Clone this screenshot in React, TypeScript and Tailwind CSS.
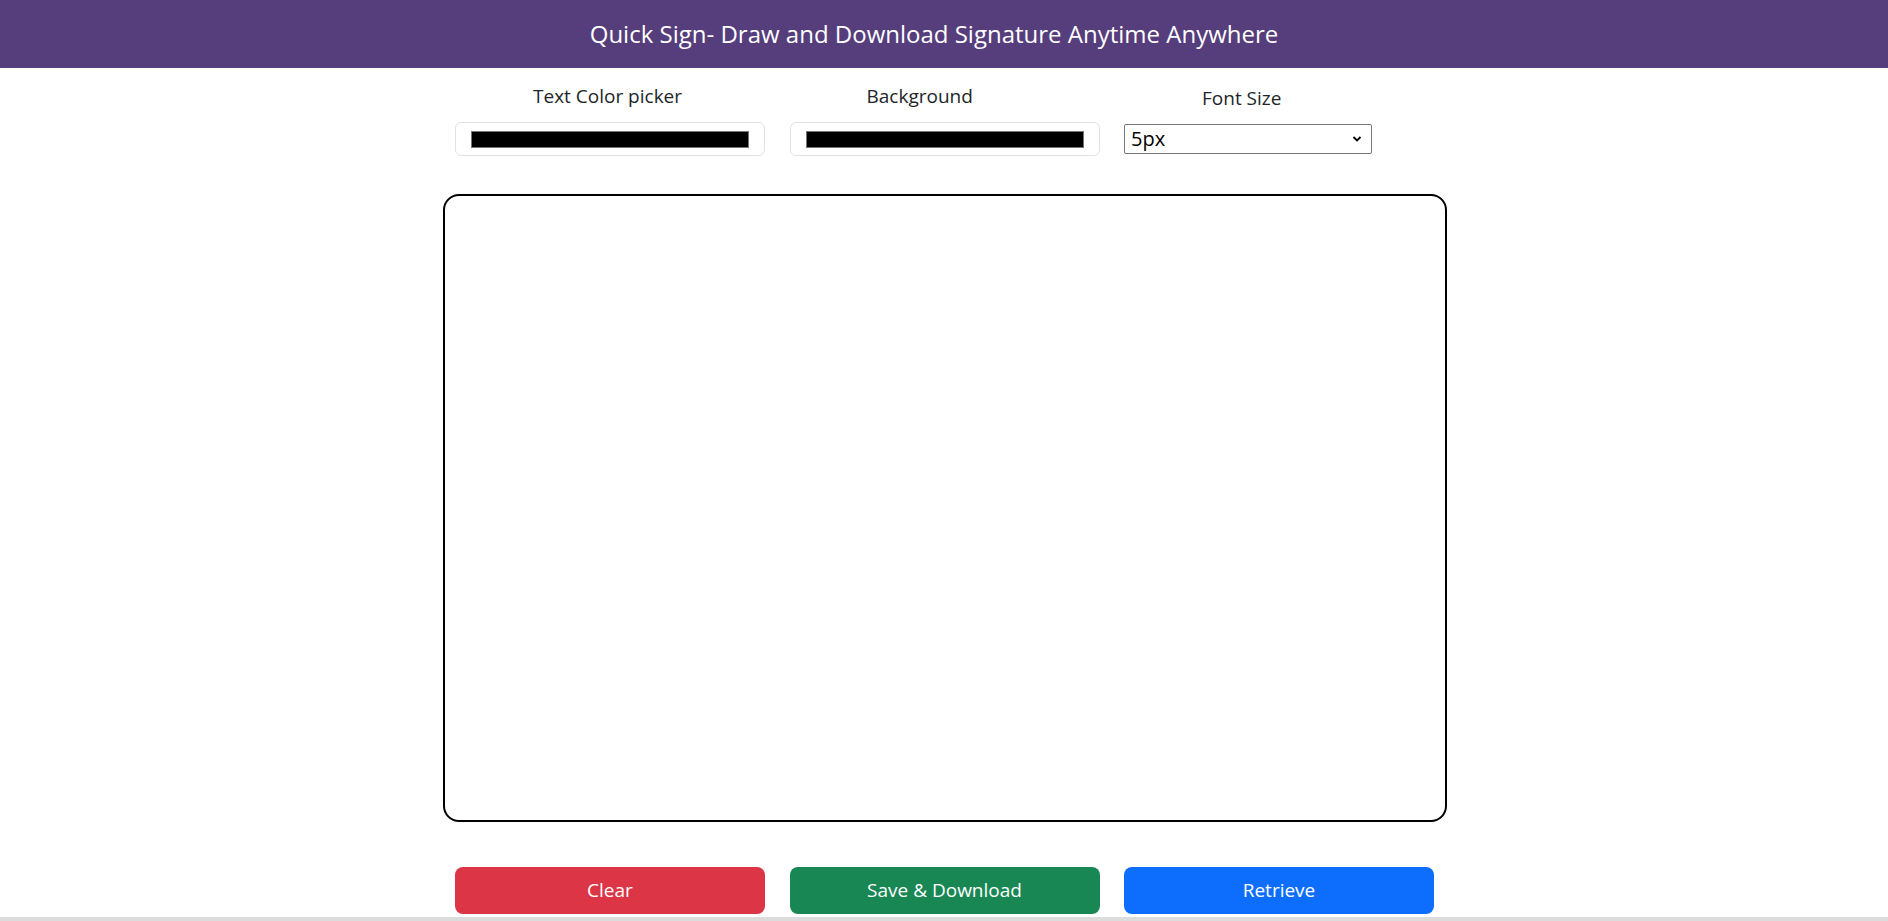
import React from "react";

function ColorBox() {
  return (
    <div className="h-[34px] w-full rounded-[6px] border border-[#dee2e6] bg-white pl-[15px] pr-[15px] pt-[8px]">
      <div className="h-[17px] w-full border border-[#767676] bg-black" />
    </div>
  );
}

export default function App() {
  return (
    <div
      className="relative min-h-screen bg-white text-[#212529]"
      style={{ fontFamily: '"Open Sans", "Noto Sans", sans-serif' }}
    >
      <header className="flex h-[68px] items-center justify-center bg-[#563d7c] pr-[20px]">
        <h1 className="text-[24px] font-normal text-white">
          Quick Sign- Draw and Download Signature Anytime Anywhere
        </h1>
      </header>

      <div className="mx-auto w-[1006px] pl-[2px]">
        <div className="mt-[14px] grid grid-cols-3 gap-x-[24.5px] pl-[12px] pr-[13px]">
          <div className="flex flex-col">
            <label className="pl-[78px] text-[19px] leading-[28px]">Text Color picker</label>
            <div className="mt-[12px]">
              <ColorBox />
            </div>
          </div>
          <div className="flex flex-col">
            <label className="pl-[77px] text-[19px] leading-[28px]">Background</label>
            <div className="mt-[12px]">
              <ColorBox />
            </div>
          </div>
          <div className="flex flex-col">
            <label className="mt-[2px] pl-[78px] text-[19px] leading-[28px]">Font Size</label>
            <div className="relative mt-[12px] h-[30px] w-[248px] rounded-[2px] border border-[#767676] bg-white">
              <span className="absolute left-[6px] top-[1px] text-[20px] leading-[26px] text-black">5px</span>
              <svg
                className="absolute right-[9px] top-[10px]"
                width="10"
                height="8"
                viewBox="0 0 10 8"
                fill="none"
              >
                <polyline points="1.5,2 5,5.5 8.5,2" stroke="#000" strokeWidth="1.8" />
              </svg>
            </div>
          </div>
        </div>

        <div className="mt-[38px] h-[628px] rounded-[16px] border-2 border-black bg-white" />

        <div className="mt-[45px] grid grid-cols-3 gap-x-[24.5px] pl-[12px] pr-[13px]">
          <button className="h-[47px] rounded-[8px] bg-[#dc3545] text-[19px] text-white">Clear</button>
          <button className="h-[47px] rounded-[8px] bg-[#198754] text-[19px] text-white">Save &amp; Download</button>
          <button className="h-[47px] rounded-[8px] bg-[#0d6efd] text-[19px] text-white">Retrieve</button>
        </div>
      </div>

      <div className="fixed bottom-0 left-0 h-[4px] w-full bg-[#dcdcdc]" />
    </div>
  );
}
